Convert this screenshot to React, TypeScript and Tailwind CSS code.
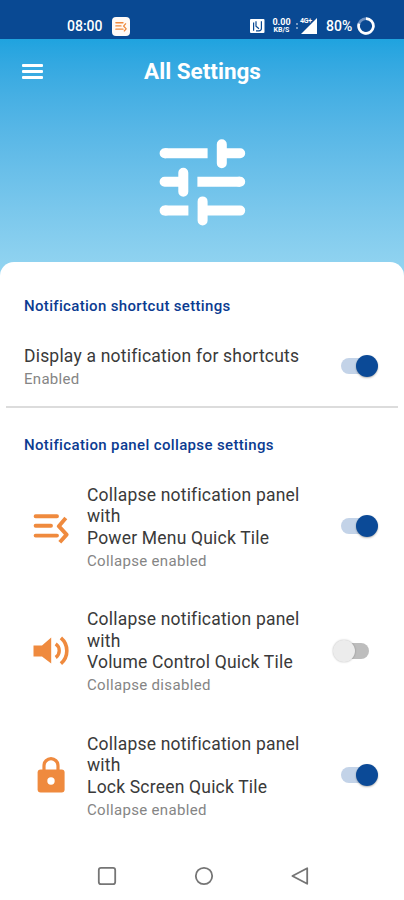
import { useState } from "react";
import type { ReactNode } from "react";
import clsx from "clsx";

type TileSetting = {
  id: string;
  name: string;
  icon: ReactNode;
  enabled: boolean;
};

function PowerMenuIcon({ className }: { className?: string }) {
  return (
    <svg viewBox="0 0 36 36" fill="none" stroke="currentColor" strokeWidth="3.9" className={className}>
      <path d="M2.6 8.2h21.4M2.6 17.8h15.4M2.6 27.6h21.4" strokeLinecap="round" />
      <path d="m32.8 10-7 8.2 7.8 8.4-6.8 7.6" strokeLinejoin="round" />
    </svg>
  );
}

function VolumeIcon() {
  return (
    <svg viewBox="0 0 36 30" className="h-[30px] w-9">
      <path d="M0.5 9.6H9L18.2 1.6V27.6L9 20.4H0.5Z" fill="#ef8a3e" />
      <path d="M22.7 7.9a8.3 8.3 0 0 1 0 13.6" fill="none" stroke="#ef8a3e" strokeWidth="3.4" />
      <path d="M27.9 1.9a17 17 0 0 1 0 25.8" fill="none" stroke="#ef8a3e" strokeWidth="3.6" />
    </svg>
  );
}

function LockIcon() {
  return (
    <svg viewBox="0 0 28 36" className="h-9 w-7">
      <path d="M7 14V8.7a7 7 0 0 1 14 0V14" fill="none" stroke="#ef8a3e" strokeWidth="3.2" />
      <rect x="0.6" y="12.5" width="27" height="23" rx="3" fill="#ef8a3e" />
      <circle cx="14" cy="24" r="3.7" fill="#fff" />
    </svg>
  );
}

function SlidersIcon() {
  return (
    <svg viewBox="0 0 88 88" fill="none" stroke="#fff" strokeWidth="10" strokeLinecap="round" className="h-[88px] w-[88px]">
      <path d="M63.8 6.2v19M63.8 15.3h18.4M25.3 34.8v19M6.6 43.8h18M44.6 63.4v19M44.6 72.6H82.2" />
      <path d="M6.6 15.3h1M81.2 43.8h1M6.6 72.6h1" />
      <path d="M6.6 15.3h43M39.4 43.8h42.8M6.6 72.6h23.8" strokeLinecap="butt" />
    </svg>
  );
}

const tiles: TileSetting[] = [
  { id: "power", name: "Power Menu Quick Tile", icon: <PowerMenuIcon className="h-9 w-9 text-[#ef8a3e]" />, enabled: true },
  { id: "volume", name: "Volume Control Quick Tile", icon: <VolumeIcon />, enabled: false },
  { id: "lock", name: "Lock Screen Quick Tile", icon: <LockIcon />, enabled: true },
];

function Toggle({ checked, onChange }: { checked: boolean; onChange: () => void }) {
  return (
    <button
      type="button"
      role="switch"
      aria-checked={checked}
      onClick={onChange}
      className={clsx("flex h-6 w-[45px] shrink-0 items-center", checked ? "justify-end" : "justify-start")}
    >
      {checked ? <span className="-mr-[13px] h-4 w-7 rounded-full bg-[#c3d3e8]" /> : null}
      <span
        className={clsx(
          "z-10 h-[22px] w-[22px] shrink-0 rounded-full",
          checked ? "bg-[#0b4a97] shadow-[0_1px_2px_rgba(0,0,0,0.3)]" : "bg-[#ececec] shadow-[0_0_2px_rgba(0,0,0,0.3)]",
        )}
      />
      {checked ? null : <span className="-ml-[14px] h-4 w-7 rounded-full bg-[#bdbdbd]" />}
    </button>
  );
}

function StatusBar() {
  return (
    <div className="flex h-[39px] shrink-0 items-center bg-[#094993] pt-[13px] pr-[29px] pl-[67px] text-white">
      <span className="w-[37px] text-[14px] leading-none font-medium">08:00</span>
      <span className="ml-2 flex h-[19px] w-[18px] items-center justify-center rounded-[4px] bg-[#fffaf6]">
        <PowerMenuIcon className="h-3 w-3 text-[#ef8a3e]" />
      </span>
      <div className="ml-auto flex items-center">
        <svg viewBox="0 0 15 14" className="h-3.5 w-[15px]">
          <rect width="14.5" height="14" rx="1" fill="#fff" />
          <path d="M3.6 11.8V3.4M6 2.2v5l3 2.6M6 11.8h3c1.6 0 2.4-.8 2.4-2.2V2.2" fill="none" stroke="#094993" strokeWidth="1.2" />
        </svg>
        <div className="ml-[6px] w-[21px] text-center font-bold">
          <div className="text-[9px] leading-[9px]">0.00</div>
          <div className="text-[7px] leading-[7px]">KB/S</div>
        </div>
        <svg viewBox="0 0 4 8" className="ml-[3px] h-2 w-1 opacity-60">
          <circle cx="2" cy="2" r="1" fill="#fff" />
          <circle cx="2" cy="6" r="1" fill="#fff" />
        </svg>
        <div className="relative ml-px h-4 w-[17px]">
          <svg viewBox="0 0 17 16" className="h-4 w-[17px]">
            <path d="M1 16 17 0V16Z" fill="#fff" />
          </svg>
          <span className="absolute top-0 left-0 text-[7px] leading-[7px] font-bold tracking-[-0.3px]">4G+</span>
        </div>
        <span className="ml-[9px] w-[29px] text-[14px] leading-none font-medium">80%</span>
        <svg viewBox="0 0 18 18" className="ml-[2px] h-[18px] w-[18px]" fill="none" strokeWidth="2.6">
          <circle cx="9" cy="9" r="7.4" stroke="#6f93c3" />
          <path d="M9 1.6A7.4 7.4 0 1 1 2 6.6" stroke="#fff" />
        </svg>
      </div>
    </div>
  );
}

function NavigationBar() {
  return (
    <nav className="mt-auto flex h-[49px] shrink-0 items-center justify-between pr-[94px] pl-[97px]">
      <svg viewBox="0 0 20 20" className="h-5 w-5" fill="none" stroke="#757575" strokeWidth="1.8">
        <rect x="1.8" y="1.8" width="16.4" height="16.4" rx="2.2" />
      </svg>
      <svg viewBox="0 0 20 20" className="h-5 w-5" fill="none" stroke="#757575" strokeWidth="1.8">
        <circle cx="10" cy="10" r="8.2" />
      </svg>
      <svg viewBox="0 0 20 20" className="h-5 w-5" fill="none" stroke="#757575" strokeWidth="1.8" strokeLinejoin="round">
        <path d="M17.2 2.2v15.6L2.4 10Z" />
      </svg>
    </nav>
  );
}

export default function App() {
  const [shortcuts, setShortcuts] = useState(true);
  const [enabled, setEnabled] = useState<Record<string, boolean>>(
    Object.fromEntries(tiles.map((tile) => [tile.id, tile.enabled])),
  );

  return (
    <div className="flex h-[900px] w-[404px] flex-col overflow-hidden bg-white font-[Roboto,sans-serif]">
      <StatusBar />

      <header className="h-[241px] shrink-0 bg-linear-to-b from-[#1fa3df] to-[#96d6f1]">
        <div className="flex h-16 items-center pr-[21px] pl-[22px]">
          <button type="button" aria-label="Menu" className="flex w-[21px] flex-col gap-[3px]">
            <span className="h-[3px] rounded-[1px] bg-white" />
            <span className="h-[3px] rounded-[1px] bg-white" />
            <span className="h-[3px] rounded-[1px] bg-white" />
          </button>
          <h1 className="flex-1 pt-0.5 pr-[21px] text-center text-[22.5px] font-bold text-white">All Settings</h1>
        </div>
        <div className="flex justify-center pt-[35px]">
          <SlidersIcon />
        </div>
      </header>

      <main className="-mt-[18px] rounded-t-[14px] bg-white pt-[34px]">
        <section className="pr-[26px] pl-6">
          <h2 className="text-[15px] leading-5 font-medium tracking-[0.33px] text-[#0b3b91]">Notification shortcut settings</h2>
          <div className="mt-[26px] flex items-center justify-between">
            <div className="pt-1">
              <p className="text-[17.5px] leading-[21.3px] tracking-[0.2px] text-[#3a3a3a]">Display a notification for shortcuts</p>
              <p className="mt-[2px] text-[15px] leading-5 tracking-[0.3px] text-[#858585]">{shortcuts ? "Enabled" : "Disabled"}</p>
            </div>
            <Toggle checked={shortcuts} onChange={() => setShortcuts(!shortcuts)} />
          </div>
        </section>

        <div className="mx-[6px] mt-[17px] h-[1.5px] bg-[#dcdcdc]" />

        <section className="pt-[27px] pr-[26px] pl-6">
          <h2 className="text-[15px] leading-5 font-medium tracking-[0.36px] text-[#0b3b91]">Notification panel collapse settings</h2>
          <div className="mt-[28.5px] flex flex-col gap-[38.5px]">
            {tiles.map((tile) => (
              <div key={tile.id} className="flex h-[86px] items-center">
                <div className="flex w-[63px] shrink-0 items-center pl-[9px]">
                  <span className="flex w-9 justify-center">{tile.icon}</span>
                </div>
                <div className="flex-1 pt-[3px]">
                  <p className="text-[17.5px] leading-[21.5px] tracking-[0.2px] text-[#3a3a3a]">
                    Collapse notification panel
                    <br />
                    with
                    <br />
                    {tile.name}
                  </p>
                  <p className="mt-[1.5px] text-[15px] leading-5 tracking-[0.33px] text-[#858585]">
                    {enabled[tile.id] ? "Collapse enabled" : "Collapse disabled"}
                  </p>
                </div>
                <Toggle
                  checked={enabled[tile.id]}
                  onChange={() => setEnabled({ ...enabled, [tile.id]: !enabled[tile.id] })}
                />
              </div>
            ))}
          </div>
        </section>
      </main>

      <NavigationBar />
    </div>
  );
}
